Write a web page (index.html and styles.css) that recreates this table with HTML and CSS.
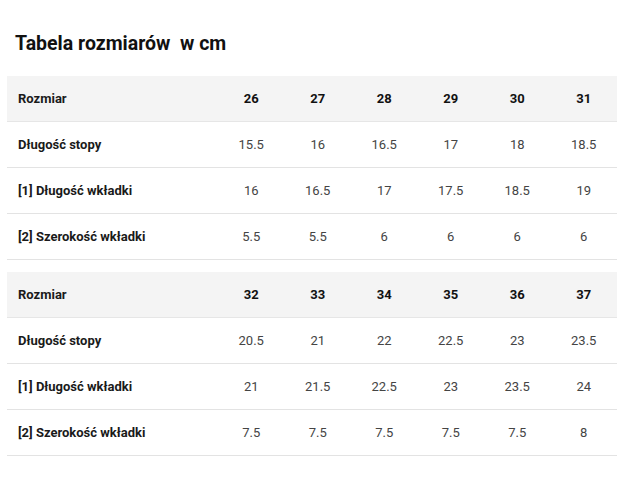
FILE: index.html
```html
<!DOCTYPE html>
<html lang="pl">
<head>
<meta charset="utf-8">
<title>Tabela rozmiarów</title>
<link rel="stylesheet" href="styles.css">
</head>
<body>
<div class="page">
  <h2 class="title">Tabela rozmiarów&nbsp; w cm</h2>
  <table class="sizes">
    <colgroup><col class="label-col"><col span="6" class="num-col"></colgroup>
    <thead>
      <tr><th class="label">Rozmiar</th><th>26</th><th>27</th><th>28</th><th>29</th><th>30</th><th>31</th></tr>
    </thead>
    <tbody>
      <tr><td class="label">Długość stopy</td><td>15.5</td><td>16</td><td>16.5</td><td>17</td><td>18</td><td>18.5</td></tr>
      <tr><td class="label">[1] Długość wkładki</td><td>16</td><td>16.5</td><td>17</td><td>17.5</td><td>18.5</td><td>19</td></tr>
      <tr><td class="label">[2] Szerokość wkładki</td><td>5.5</td><td>5.5</td><td>6</td><td>6</td><td>6</td><td>6</td></tr>
    </tbody>
  </table>
  <table class="sizes second">
    <colgroup><col class="label-col"><col span="6" class="num-col"></colgroup>
    <thead>
      <tr><th class="label">Rozmiar</th><th>32</th><th>33</th><th>34</th><th>35</th><th>36</th><th>37</th></tr>
    </thead>
    <tbody>
      <tr><td class="label">Długość stopy</td><td>20.5</td><td>21</td><td>22</td><td>22.5</td><td>23</td><td>23.5</td></tr>
      <tr><td class="label">[1] Długość wkładki</td><td>21</td><td>21.5</td><td>22.5</td><td>23</td><td>23.5</td><td>24</td></tr>
      <tr><td class="label">[2] Szerokość wkładki</td><td>7.5</td><td>7.5</td><td>7.5</td><td>7.5</td><td>7.5</td><td>8</td></tr>
    </tbody>
  </table>
</div>
</body>
</html>
```
FILE: styles.css
```css
html, body {
  margin: 0;
  padding: 0;
  background: #ffffff;
}
body {
  font-family: Roboto, "Liberation Sans", Arial, sans-serif;
  color: #222;
}
.page {
  padding: 0 23px 0 7px;
}
.title {
  margin: 0;
  padding: 32px 0 0 8px;
  height: 76px;
  box-sizing: border-box;
  font-size: 19.5px;
  font-weight: 700;
  line-height: 24px;
  color: #111;
}
.sizes {
  width: 610px;
  border-collapse: collapse;
  table-layout: fixed;
  font-size: 13px;
}
.sizes.second {
  margin-top: 12px;
}
.label-col {
  width: 211px;
}
.sizes th,
.sizes td {
  padding: 0;
  text-align: center;
  vertical-align: middle;
}
.sizes th {
  height: 45px;
  background: #f4f4f4;
  font-weight: 700;
  color: #111;
  border-bottom: 1px solid #e6e6e6;
}
.sizes td {
  height: 45px;
  color: #444;
  border-bottom: 1px solid #e3e3e3;
}
.sizes .label {
  text-align: left;
  padding-left: 11px;
  font-weight: 700;
  color: #1a1a1a;
}
```
